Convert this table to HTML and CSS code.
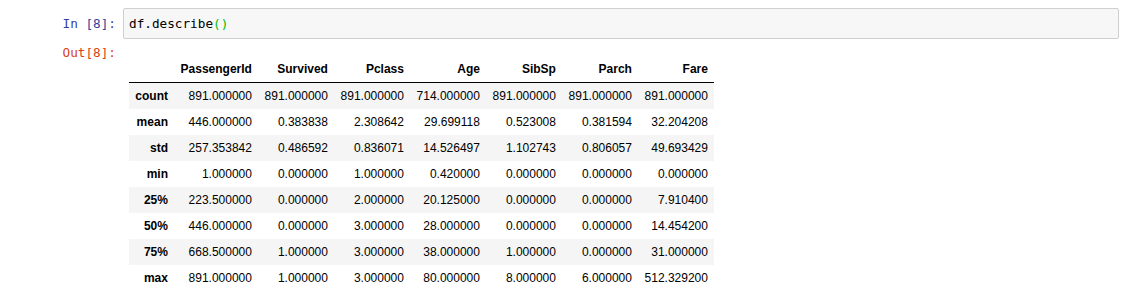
FILE: index.html
```html
<!DOCTYPE html>
<html>
<head>
<meta charset="utf-8">
<link rel="stylesheet" href="styles.css">
</head>
<body>
<div class="cell">
  <div class="row input-row">
    <div class="prompt in-prompt">In&nbsp;[8]:</div>
    <div class="input-area"><span class="code">df.describe<span class="bracket">()</span></span></div>
  </div>
  <div class="row output-row">
    <div class="prompt out-prompt">Out[8]:</div>
    <div class="output-area">
      <table class="dataframe">
        <thead>
          <tr><th></th><th>PassengerId</th><th>Survived</th><th>Pclass</th><th>Age</th><th>SibSp</th><th>Parch</th><th>Fare</th></tr>
        </thead>
        <tbody>
          <tr><th>count</th><td>891.000000</td><td>891.000000</td><td>891.000000</td><td>714.000000</td><td>891.000000</td><td>891.000000</td><td>891.000000</td></tr>
          <tr><th>mean</th><td>446.000000</td><td>0.383838</td><td>2.308642</td><td>29.699118</td><td>0.523008</td><td>0.381594</td><td>32.204208</td></tr>
          <tr><th>std</th><td>257.353842</td><td>0.486592</td><td>0.836071</td><td>14.526497</td><td>1.102743</td><td>0.806057</td><td>49.693429</td></tr>
          <tr><th>min</th><td>1.000000</td><td>0.000000</td><td>1.000000</td><td>0.420000</td><td>0.000000</td><td>0.000000</td><td>0.000000</td></tr>
          <tr><th>25%</th><td>223.500000</td><td>0.000000</td><td>2.000000</td><td>20.125000</td><td>0.000000</td><td>0.000000</td><td>7.910400</td></tr>
          <tr><th>50%</th><td>446.000000</td><td>0.000000</td><td>3.000000</td><td>28.000000</td><td>0.000000</td><td>0.000000</td><td>14.454200</td></tr>
          <tr><th>75%</th><td>668.500000</td><td>1.000000</td><td>3.000000</td><td>38.000000</td><td>1.000000</td><td>0.000000</td><td>31.000000</td></tr>
          <tr><th>max</th><td>891.000000</td><td>1.000000</td><td>3.000000</td><td>80.000000</td><td>8.000000</td><td>6.000000</td><td>512.329200</td></tr>
        </tbody>
      </table>
    </div>
  </div>
</div>
</body>
</html>
```
FILE: styles.css
```css
html, body {
  margin: 0;
  padding: 0;
  background: #ffffff;
}

.cell {
  padding-top: 8px;
  width: 1140px;
}

.row {
  display: flex;
  align-items: flex-start;
}

.prompt {
  width: 116px;
  padding-right: 7px;
  text-align: right;
  font-family: "DejaVu Sans Mono", "Liberation Mono", monospace;
  font-size: 12.7px;
  line-height: 17px;
  flex: none;
}

.in-prompt {
  color: #303F9F;
  padding-top: 7px;
}

.out-prompt {
  color: #D84315;
  padding-top: 0;
}

.input-area {
  flex: 1;
  margin-right: 21px;
  height: 29px;
  border: 1px solid #cfcfcf;
  border-radius: 2px;
  background: #f7f7f7;
  padding-left: 5px;
  display: flex;
  align-items: center;
}

.code {
  font-family: "DejaVu Sans Mono", "Liberation Mono", monospace;
  font-size: 12.7px;
  color: #000;
  line-height: 17px;
}

.bracket {
  color: #0b0;
}

.output-row {
  margin-top: 5px;
}

.output-area {
  padding-left: 6px;
  padding-top: 12px;
}

.dataframe {
  border-collapse: collapse;
  border-spacing: 0;
  font-family: "Liberation Sans", Arial, sans-serif;
  font-size: 12px;
  color: #000;
}

.dataframe th,
.dataframe td {
  padding: 6px 6.3px;
  line-height: normal;
  text-align: right;
  vertical-align: middle;
  white-space: nowrap;
}

.dataframe th {
  font-weight: bold;
}

.dataframe thead {
  border-bottom: 1px solid #000;
}

.dataframe tbody tr:nth-child(odd) {
  background: #f5f5f5;
}
```
